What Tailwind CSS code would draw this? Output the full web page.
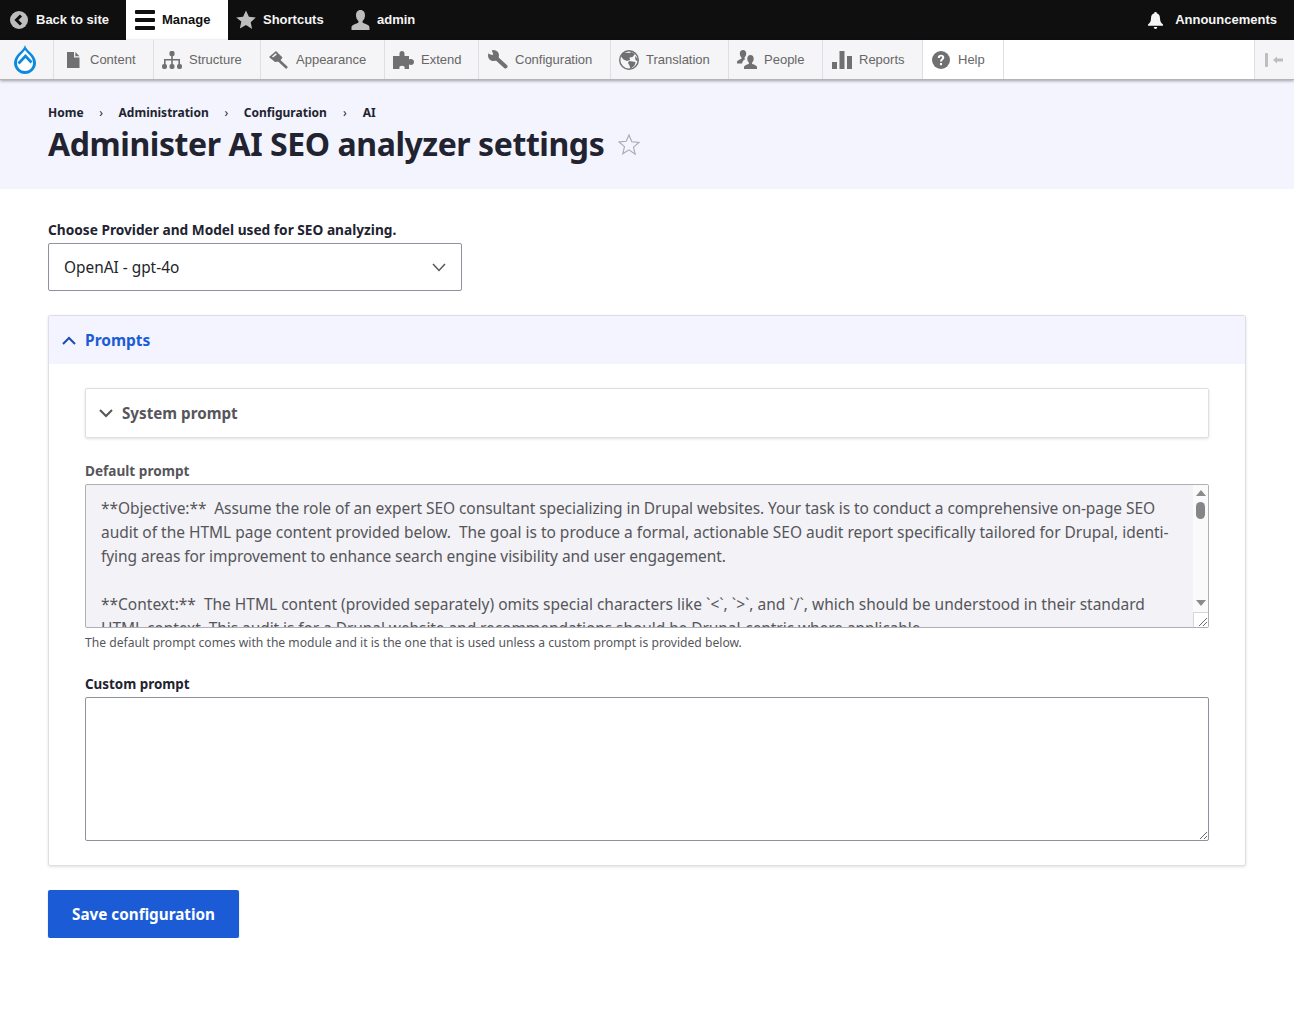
<!DOCTYPE html>
<html lang="en">
<head>
    <meta charset="UTF-8">
    <meta name="viewport" content="width=device-width, initial-scale=1.0">
    <title>Administer AI SEO analyzer settings</title>
    <script src="https://cdn.jsdelivr.net/npm/@tailwindcss/browser@4"></script>
</head>
<body class="bg-white font-['Noto_Sans',sans-serif] text-[#222330]">

    <!-- Toolbar -->
    <div class="h-10 bg-[#0f0f0f] flex items-stretch justify-between font-['Liberation_Sans',sans-serif] text-[13px] font-bold text-[#f5f5f5]">
        <div class="flex items-stretch">
            <a class="w-[126px] flex items-center gap-[8px] pl-[10px]">
                <svg class="w-[18px] h-[18px]" viewBox="0 0 18 18"><circle cx="9" cy="9" r="9" fill="#bdbdbd"/><path d="M11 4.500 6.500 9l4.500 4.500" fill="none" stroke="#0f0f0f" stroke-width="3"/></svg>
                Back to site
            </a>
            <a class="w-[102px] bg-white text-[#0f0f0f] flex items-center gap-[7px] pl-[9px]">
                <svg class="w-5 h-5" viewBox="0 0 20 20" fill="#0f0f0f"><rect y="0" width="20" height="4" rx="1"/><rect y="8" width="20" height="4" rx="1"/><rect y="16" width="20" height="4" rx="1"/></svg>
                Manage
            </a>
            <a class="w-[115px] flex items-center gap-[7px] pl-[8px]">
                <svg class="w-5 h-5" viewBox="0 0 20 20"><path d="M10 .5l2.900 6.300 6.900.8-5.100 4.700 1.400 6.800L10 15l-6.100 3.400 1.400-6.800L.2 7.600l6.900-.8z" fill="#bdbdbd"/></svg>
                Shortcuts
            </a>
            <a class="flex items-center gap-[7px] pl-[8px]">
                <svg class="w-[19px] h-5" viewBox="0 0 19 20"><path d="M9.500 0c3 0 4.500 2.400 4.500 5.200 0 2.200-.9 4.400-2.200 5.600-.6.700-.4 1.900.5 2.300 2.500 1 6.200 2 6.200 4.300V20H.5v-2.600c0-2.300 3.700-3.300 6.200-4.300.9-.4 1.100-1.600.5-2.300C5.900 9.600 5 7.400 5 5.200 5 2.400 6.500 0 9.500 0z" fill="#bdbdbd"/></svg>
                admin
            </a>
        </div>
        <a class="flex items-center gap-[12px] pr-[17px]">
            <svg class="w-[15px] h-[17px]" viewBox="0 0 15 17"><path d="M7.500 0c.8 0 1.300.5 1.300 1.200 2.200.6 3.200 2.500 3.200 5 0 3 1 4.600 3 6.300v1.300H0v-1.300c2-1.700 3-3.300 3-6.300 0-2.500 1-4.400 3.200-5C6.200.5 6.700 0 7.500 0zM5.800 15h3.400c0 1.200-.7 2-1.700 2s-1.700-.8-1.700-2z" fill="#f5f5f5"/></svg>
            Announcements
        </a>
    </div>

    <!-- Tray -->
    <nav class="relative h-10 bg-white flex items-stretch border-b border-[#b4b4b8] shadow-[0_1px_3px_rgba(0,0,0,0.35)] font-['Liberation_Sans',sans-serif] text-[13px] text-[#666]">
        <div class="w-[54px] bg-[#f5f4f6] border-r border-[#dedfe3] flex items-center pl-[14px]">
            <svg class="w-[22px] h-[29px]" viewBox="0 0 22 29">
                <path d="M11 0c.5 3 3 5 6 8 3 3 5 6 5 10 0 6-5 11-11 11S0 24 0 18c0-4 2-7 5-10 3-3 5.500-5 6-8z" fill="#0d8ae0"/>
                <path d="M11 5c1 1.500 2.500 3 4.200 4.700C17.500 12 19 14.500 19 18c0 4.500-3.600 8-8 8s-8-3.500-8-8c0-3.500 1.500-6 3.800-8.300C8.500 8 10 6.500 11 5z" fill="#fff"/>
                <path d="M4.500 18.500l7-7.500 6 6.500" fill="none" stroke="#0d8ae0" stroke-width="2.800"/>
                <path d="M11 16.500l3.200 4.200c.8 1.800-1 3.300-3.200 3.300s-4-1.500-3.200-3.300z" fill="#fff"/>
            </svg>
        </div>
        <a class="w-[100px] bg-[#f5f4f6] border-r border-[#dedfe3] flex items-center gap-[9px] pl-[12px]">
            <svg class="w-[15px] h-4" viewBox="0 0 15 16" fill="#707070"><path d="M1 0h7v5.500h5.500V16H1z"/><path d="M9.300 0l4.200 4.200H9.300z"/></svg>
            Content
        </a>
        <a class="w-[107px] bg-[#f5f4f6] border-r border-[#dedfe3] flex items-center gap-[7px] pl-[8px]">
            <svg class="w-5 h-[18px]" viewBox="0 0 20 18" fill="#707070"><rect x="7.500" y="0" width="5" height="5" rx="1.500"/><rect x="0" y="13" width="5" height="5" rx="2"/><rect x="7.500" y="13" width="5" height="5" rx="2"/><rect x="15" y="13" width="5" height="5" rx="2"/><path d="M9.200 4h1.600v4H18v6h-1.600V9.600h-5.600V14H9.200V9.600H3.600V14H2V8h7.200z"/></svg>
            Structure
        </a>
        <a class="w-[124px] bg-[#f5f4f6] border-r border-[#dedfe3] flex items-center gap-[7px] pl-[8px]">
            <svg class="w-5 h-[18px]" viewBox="0 0 20 18"><path d="M0 6l7-6 6.500 6.500-3 4-4.500.5z" fill="#707070"/><path d="M3.500 6l3.800-3.200" stroke="#f5f4f6" stroke-width="1.600"/><path d="M10 9.500l8 7.500" stroke="#707070" stroke-width="2.600"/></svg>
            Appearance
        </a>
        <a class="w-[94px] bg-[#f5f4f6] border-r border-[#dedfe3] flex items-center gap-[7px] pl-[8px]">
            <svg class="w-[21px] h-[18px]" viewBox="0 0 21 18" fill="#707070"><path d="M0 5h6.500V2.800C6.500 1 7.500 0 9 0s2.500 1 2.500 2.800V5H16v3.500c2.500-1 5 0 5 2.500s-2.500 3.500-5 2.500V18h-4.500c.7-2-.5-3.200-2.500-3.200S5.800 16 6.500 18H0z"/></svg>
            Extend
        </a>
        <a class="w-[132px] bg-[#f5f4f6] border-r border-[#dedfe3] flex items-center gap-[7px] pl-[9px]">
            <svg class="w-[20px] h-[19px]" viewBox="0 0 20 19"><circle cx="5.500" cy="5.500" r="5.500" fill="#707070"/><path d="M0 0h3.500L6 5.800.5 3.800z" fill="#f5f4f6"/><path d="M6 6l11.500 10.500" stroke="#707070" stroke-width="4" stroke-linecap="round"/></svg>
            Configuration
        </a>
        <a class="w-[118px] bg-[#f5f4f6] border-r border-[#dedfe3] flex items-center gap-[7px] pl-[8px]">
            <svg class="w-5 h-5" viewBox="0 0 20 20"><circle cx="10" cy="10" r="9.300" fill="#f5f4f6" stroke="#707070" stroke-width="1.400"/><path d="M5 2.500l5.500.5 2-1 3.500 2-2.500 3-3 .5.500 2.500-3 1-3.500-1.500L2 6.500C2.500 5 3.500 3.500 5 2.500z M10 11l6.500 1-1 3.500-4 3.500-1-3.500-1.500-2.500z M16 6l2.500 2.500.5 3-2.500-1.500z" fill="#707070"/></svg>
            Translation
        </a>
        <a class="w-[94px] bg-[#f5f4f6] border-r border-[#dedfe3] flex items-center gap-[7px] pl-[8px]">
            <svg class="w-5 h-[19px]" viewBox="0 0 20 19" fill="#707070"><path d="M6 0c2 0 3.200 1.500 3.200 3.500 0 1.500-.6 3-1.500 3.800-.4.500-.3 1.100.2 1.500l.6.300C6.500 10 5.500 11.500 5 13.500H0V12c0-1.500 2.500-2.300 4-3 .6-.3.800-1.200.3-1.700C3.400 6.500 2.800 5 2.800 3.500 2.800 1.500 4 0 6 0z"/><path d="M13.500 5c2 0 3.200 1.600 3.200 3.700 0 1.400-.6 2.900-1.500 3.800-.4.500-.3 1.300.3 1.600 1.600.7 4.500 1.500 4.500 3V19H7v-1.900c0-1.500 2.900-2.300 4.500-3 .6-.3.700-1.100.3-1.600-.9-.9-1.500-2.400-1.500-3.800C10.300 6.600 11.500 5 13.500 5z"/></svg>
            People
        </a>
        <a class="w-[100px] bg-[#f5f4f6] border-r border-[#dedfe3] flex items-center gap-[7px] pl-[9px]">
            <svg class="w-5 h-[18px]" viewBox="0 0 20 18" fill="#707070"><rect y="11" width="5" height="7"/><rect x="7.500" width="5" height="18"/><rect x="15" y="5" width="5" height="13"/></svg>
            Reports
        </a>
        <a class="w-[81px] border-r border-[#dedfe3] flex items-center gap-[8px] pl-[9px]">
            <svg class="w-[18px] h-[18px]" viewBox="0 0 18 18"><circle cx="9" cy="9" r="9" fill="#707070"/><path d="M5.800 7c0-2 1.300-3.200 3.300-3.200s3.200 1.100 3.200 2.800c0 2.300-2.300 2.400-2.300 4H8c0-2.600 2.200-2.900 2.200-4 0-.7-.4-1.100-1.100-1.100-.8 0-1.200.5-1.200 1.500z" fill="#fff"/><rect x="8" y="12" width="2" height="2.200" fill="#fff"/></svg>
            Help
        </a>
        <div class="flex-1"></div>
        <div class="w-[40px] bg-[#f5f4f6] border-l border-[#dedfe3] flex items-center pl-[10px]">
            <svg class="w-[19px] h-[14px]" viewBox="0 0 19 14" fill="#bdbdbd"><rect width="3" height="14" rx="1"/><path d="M8 7l4-3.500V5.500h6v3h-6v2z"/></svg>
        </div>
    </nav>

    <!-- Page title -->
    <header class="h-[109px] bg-[#f3f4fd] px-12 pt-[24px]">
        <ol class="flex items-center text-[12px] font-bold leading-[18px] text-[#222330]">
            <li>Home</li>
            <li class="w-[35px] text-center font-normal">›</li>
            <li>Administration</li>
            <li class="w-[35px] text-center font-normal">›</li>
            <li>Configuration</li>
            <li class="w-[36px] text-center font-normal">›</li>
            <li>AI</li>
        </ol>
        <div class="flex items-center gap-[13px] mt-[2px]">
            <h1 class="text-[32px] leading-[40px] font-bold tracking-[-0.43px]">Administer AI SEO analyzer settings</h1>
            <svg class="w-6 h-6 mt-[2px]" viewBox="0 0 24 24"><path d="M12 2l2.800 6.800 7.200.6-5.500 4.700 1.700 7.100L12 16.800l-6.200 3.900 1.700-7.100L2 8.900l7.200-.6z" fill="none" stroke="#a9a9ad" stroke-width="1.100"/></svg>
        </div>
    </header>

    <!-- Form -->
    <main class="px-12 pt-[32px]">
        <label class="block text-[13.700px] font-bold leading-[18px] mb-[4px]">Choose Provider and Model used for SEO analyzing.</label>
        <div class="w-[414px] h-[48px] border border-[#8e929c] rounded-[2px] flex items-center justify-between pl-[15px] pr-[15px] text-[15.400px] text-[#232429]">
            <span class="pt-[2px]">OpenAI - gpt-4o</span>
            <svg class="w-[14px] h-[9px]" viewBox="0 0 14 9"><path d="M1 1l6 6.500L13 1" fill="none" stroke="#55565b" stroke-width="1.500"/></svg>
        </div>

        <section class="mt-6 border border-[#dedfe4] rounded-[2px] shadow-[0_1px_3px_rgba(0,0,0,0.12)]">
            <div class="h-[48px] bg-[#f3f4ff] flex items-center gap-[9px] pl-[13px] text-[15.500px] font-bold text-[#1b5cd6]">
                <svg class="w-[14px] h-[9px]" viewBox="0 0 14 9"><path d="M1 8l6-6 6 6" fill="none" stroke="#1b4cb0" stroke-width="2"/></svg>
                <span class="pt-[2px]">Prompts</span>
            </div>
            <div class="px-9 pt-6 pb-6">
                <div class="h-[50px] border border-[#dedfe4] rounded-[2px] shadow-[0_1px_3px_rgba(0,0,0,0.12)] flex items-center gap-[9px] pl-[13px] text-[15.200px] font-bold text-[#55565b]">
                    <svg class="w-[14px] h-[9px]" viewBox="0 0 14 9"><path d="M1 1l6 6 6-6" fill="none" stroke="#55565b" stroke-width="2"/></svg>
                    System prompt
                </div>

                <label class="block mt-[24px] text-[13.600px] font-bold leading-[18px] mb-[4px] text-[#55565b]">Default prompt</label>
                <div class="h-[144px] border border-[#aeb0b6] rounded-[2px] bg-[#f3f2f6] flex">
                    <div class="flex-1 overflow-hidden pl-[15px] pt-[11px] text-[15.500px] tracking-[-0.07px] leading-[24px] text-[#55565b] whitespace-pre">**Objective:**  Assume the role of an expert SEO consultant specializing in Drupal websites. Your task is to conduct a comprehensive on-page SEO
<span class="tracking-[-0.01px]">audit of the HTML page content provided below.  The goal is to produce a formal, actionable SEO audit report specifically tailored for Drupal, identi-</span>
fying areas for improvement to enhance search engine visibility and user engagement.

<span class="tracking-[-0.003px]">**Context:**  The HTML content (provided separately) omits special characters like `&lt;`, `&gt;`, and `/`, which should be understood in their standard</span>
HTML context. This audit is for a Drupal website and recommendations should be Drupal-centric where applicable.</div>
                    <div class="w-[15px] bg-[#fafafa] flex flex-col items-center">
                        <svg class="w-[10px] h-[6px] mt-[5px]" viewBox="0 0 10 6"><path d="M5 0l5 6H0z" fill="#8a8a8f"/></svg>
                        <div class="w-[9px] h-[17px] rounded-full bg-[#85858a] mt-[6px]"></div>
                        <div class="flex-1"></div>
                        <svg class="w-[10px] h-[6px] mb-[6px]" viewBox="0 0 10 6"><path d="M0 0h10L5 6z" fill="#8a8a8f"/></svg>
                        <div class="w-[15px] h-[15px] bg-white border-t border-l border-[#d5d5d8] flex items-end justify-end">
                            <svg class="w-[10px] h-[10px]" viewBox="0 0 10 10"><path d="M1 9l8-8M5 9l4-4" stroke="#6b6b70" stroke-width="1"/></svg>
                        </div>
                    </div>
                </div>
                <p class="mt-[7px] text-[12.130px] leading-[16px] text-[#55565b]">The default prompt comes with the module and it is the one that is used unless a custom prompt is provided below.</p>

                <label class="block mt-[24px] text-[13.400px] font-bold leading-[18px] mb-[4px]">Custom prompt</label>
                <textarea class="block w-full h-[144px] border border-[#8e929c] rounded-[2px] bg-white"></textarea>
            </div>
        </section>

        <button class="mt-6 w-[191px] h-[48px] bg-[#1b5cd6] rounded-[2px] text-white text-[15.250px] font-bold shadow-[0_1px_2px_rgba(0,0,0,0.2)]">Save configuration</button>
    </main>
</body>
</html>
